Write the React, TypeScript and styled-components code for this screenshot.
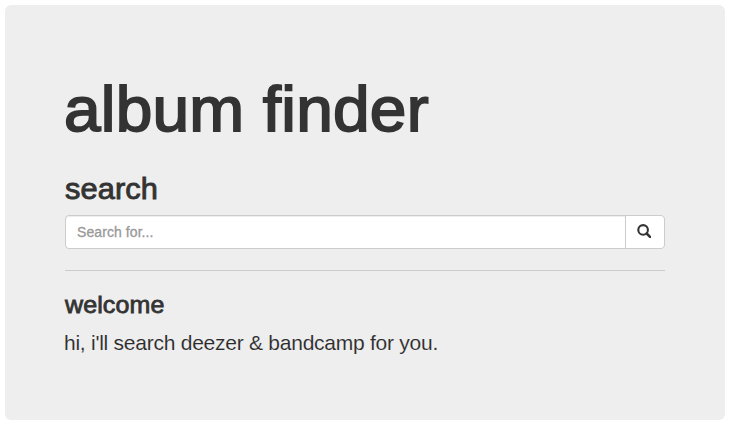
import React, { useState } from "react";
import styled, { createGlobalStyle } from "styled-components";

const GlobalStyle = createGlobalStyle`
  *, *::before, *::after { box-sizing: border-box; }
  body {
    margin: 0;
    background: #fff;
    color: #333;
    font-family: "Liberation Sans", Arial, sans-serif;
    font-size: 14px;
    line-height: 20px;
  }
`;

const Jumbotron = styled.main`
  margin: 5px 6px 6px 5px;
  height: 415px;
  padding: 69px 60px 0;
  background: #eee;
  border-radius: 6px;
`;

const Title = styled.h1`
  margin: 0 0 0 -1px;
  font-size: 63px;
  line-height: 70px;
  font-weight: 500;
  letter-spacing: 0.2px;
  white-space: nowrap;
  transform: scaleX(1.045);
  transform-origin: 0 50%;
  -webkit-text-stroke: 1.8px #333;
`;

const Heading = styled.h2`
  margin: 28px 0 9px;
  font-size: 30px;
  line-height: 34px;
  font-weight: 500;
  letter-spacing: 0.1px;
  transform: scaleX(1.025);
  transform-origin: 0 50%;
  -webkit-text-stroke: 0.9px #333;
`;

const SubHeading = styled.h3`
  margin: 0 0 10px;
  font-size: 24px;
  line-height: 27px;
  font-weight: 500;
  letter-spacing: 0.1px;
  transform: scaleX(1.042);
  transform-origin: 0 50%;
  -webkit-text-stroke: 0.8px #333;
`;

const Lead = styled.p`
  margin: 0 0 0 -1px;
  color: #2b2b2b;
  font-size: 21px;
  line-height: 30px;
  font-weight: 200;
  letter-spacing: -0.25px;
  -webkit-text-stroke: 0.1px #eee;
`;

const InputGroup = styled.form`
  display: flex;
  height: 34px;
`;

const SearchInput = styled.input`
  flex: 1;
  min-width: 0;
  padding: 6px 11px;
  border: 1px solid #ccc;
  border-radius: 4px 0 0 4px;
  background: #fff;
  box-shadow: inset 0 1px 1px rgba(0, 0, 0, 0.075);
  font: inherit;
  color: #555;
  &::placeholder {
    color: #999;
    opacity: 1;
    letter-spacing: 0.08px;
    -webkit-text-stroke: 0.3px #999;
  }
`;

const SearchButton = styled.button`
  display: flex;
  align-items: center;
  justify-content: center;
  width: 40px;
  margin-left: -1px;
  padding: 0 2px 2px 0;
  border: 1px solid #ccc;
  border-radius: 0 4px 4px 0;
  background: #fff;
  color: #333;
`;

const Divider = styled.hr`
  margin: 21px 0 20px;
  border: 0;
  border-top: 1px solid #ccc;
`;

const SearchIcon = () => (
  <svg width="14" height="14" viewBox="0 0 14 14" fill="none" stroke="currentColor">
    <circle cx="6.1" cy="5.9" r="4.8" strokeWidth="2.1" />
    <path d="M9.7 9.5l3.3 3.3" strokeWidth="2.5" strokeLinecap="round" />
  </svg>
);

export default function App() {
  const [query, setQuery] = useState("");
  return (
    <>
      <GlobalStyle />
      <Jumbotron>
        <Title>album finder</Title>
        <Heading>search</Heading>
        <InputGroup onSubmit={(e) => e.preventDefault()}>
          <SearchInput
            placeholder="Search for..."
            value={query}
            onChange={(e) => setQuery(e.target.value)}
          />
          <SearchButton type="submit" aria-label="Search"><SearchIcon /></SearchButton>
        </InputGroup>
        <Divider />
        <SubHeading>welcome</SubHeading>
        <Lead>hi, i'll search deezer &amp; bandcamp for you.</Lead>
      </Jumbotron>
    </>
  );
}
